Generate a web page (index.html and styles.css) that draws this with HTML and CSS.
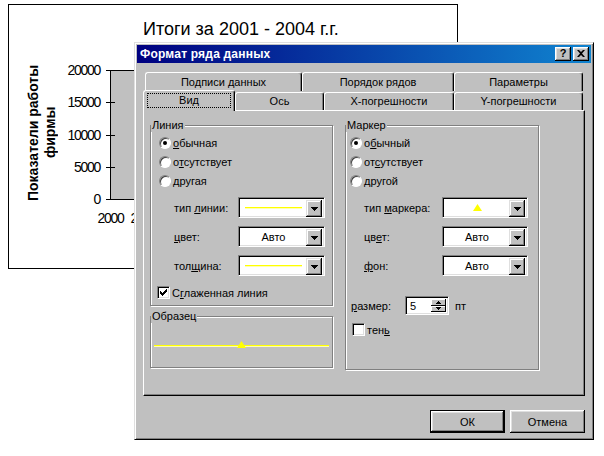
FILE: index.html
```html
<!DOCTYPE html>
<html>
<head>
<meta charset="utf-8">
<link rel="stylesheet" href="styles.css">
</head>
<body>
<div class="desk">
  <div class="chart">
    <div class="chart-title">Итоги за 2001 - 2004 г.г.</div>
    <div class="chart-main">
      <div class="ylabel">Показатели работы<br>фирмы</div>
      <div class="yticks"><span>20000</span><span>15000</span><span>10000</span><span>5000</span><span>0</span></div>
      <div class="tickmarks"><i></i><i></i><i></i><i></i><i></i></div>
      <div class="plot"></div>
    </div>
    <div class="xlabels"><span>2000</span><span>2001</span><span>2002</span><span>2003</span><span>2004</span></div>
  </div>

  <div class="dialog">
    <div class="titlebar">
      <span class="title">Формат ряда данных</span>
      <div class="cbtns">
        <span class="cbtn">?</span>
        <span class="cbtn"><svg width="8" height="7" viewBox="0 0 8 7"><path d="M0 0h2l2 2 2-2h2L5 3.5 8 7H6L4 5 2 7H0l3-3.5z" fill="#000"/></svg></span>
      </div>
    </div>
    <div class="dlg-body">
      <div class="tabrow back">
        <div class="tab w157">Подписи данных</div>
        <div class="tab w152">Порядок рядов</div>
        <div class="tab w129">Параметры</div>
      </div>
      <div class="tabrow front">
        <div class="tab sel w92"><span class="focus">Вид</span></div>
        <div class="tab w89">Ось</div>
        <div class="tab w130">X-погрешности</div>
        <div class="tab w129">Y-погрешности</div>
      </div>
      <div class="panel">
        <div class="col-left">
          <div class="group g-line">
            <div class="gtitle">Линия</div>
            <div class="radios pad-l">
              <div class="rrow"><span class="radio on"></span><span><u>о</u>бычная</span></div>
              <div class="rrow"><span class="radio"></span><span>о<u>т</u>сутствует</span></div>
              <div class="rrow"><span class="radio"></span><span>другая</span></div>
            </div>
            <div class="crows crows-l">
              <div class="crow"><span class="clabel">тип <u>л</u>инии:</span>
                <div class="combo"><div class="cval"><span class="yline"></span></div><div class="dd"><svg width="7" height="4" viewBox="0 0 7 4"><path d="M0 0h7v1h-1v1h-1v1h-1v1h-1v-1h-1v-1h-1v-1h-1z"/></svg></div></div>
              </div>
              <div class="crow"><span class="clabel"><u>ц</u>вет:</span>
                <div class="combo"><div class="cval">Авто</div><div class="dd"><svg width="7" height="4" viewBox="0 0 7 4"><path d="M0 0h7v1h-1v1h-1v1h-1v1h-1v-1h-1v-1h-1v-1h-1z"/></svg></div></div>
              </div>
              <div class="crow"><span class="clabel">тол<u>щ</u>ина:</span>
                <div class="combo"><div class="cval"><span class="yline"></span></div><div class="dd"><svg width="7" height="4" viewBox="0 0 7 4"><path d="M0 0h7v1h-1v1h-1v1h-1v1h-1v-1h-1v-1h-1v-1h-1z"/></svg></div></div>
              </div>
            </div>
            <div class="chkrow chk-smooth">
              <span class="check"><svg width="7" height="7" viewBox="0 0 7 7"><path d="M6 0h1v3h-1v1h-1v1h-1v1h-1v1h-1v-1h-1v-1h-1v-3h1v1h1v1h1v-1h1v-1h1v-1h1z"/></svg></span>
              <span>С<u>г</u>лаженная линия</span>
            </div>
          </div>
          <div class="group g-sample">
            <div class="gtitle">Образец</div>
            <div class="sample"><svg width="9" height="7" viewBox="0 0 9 7"><path d="M4.5 0L9 7H0z" fill="#ffff00"/></svg></div>
          </div>
        </div>
        <div class="group g-marker">
          <div class="gtitle">Маркер</div>
          <div class="radios pad-r">
            <div class="rrow"><span class="radio on"></span><span>о<u>б</u>ычный</span></div>
            <div class="rrow"><span class="radio"></span><span>от<u>с</u>утствует</span></div>
            <div class="rrow"><span class="radio"></span><span>другой</span></div>
          </div>
          <div class="crows crows-r">
            <div class="crow"><span class="clabel">тип <u>м</u>аркера:</span>
              <div class="combo c86"><div class="cval"><svg width="9" height="7" viewBox="0 0 9 7"><path d="M4.5 0L9 7H0z" fill="#ffff00"/></svg></div><div class="dd"><svg width="7" height="4" viewBox="0 0 7 4"><path d="M0 0h7v1h-1v1h-1v1h-1v1h-1v-1h-1v-1h-1v-1h-1z"/></svg></div></div>
            </div>
            <div class="crow"><span class="clabel">цв<u>е</u>т:</span>
              <div class="combo c86"><div class="cval">Авто</div><div class="dd"><svg width="7" height="4" viewBox="0 0 7 4"><path d="M0 0h7v1h-1v1h-1v1h-1v1h-1v-1h-1v-1h-1v-1h-1z"/></svg></div></div>
            </div>
            <div class="crow"><span class="clabel"><u>ф</u>он:</span>
              <div class="combo c86"><div class="cval">Авто</div><div class="dd"><svg width="7" height="4" viewBox="0 0 7 4"><path d="M0 0h7v1h-1v1h-1v1h-1v1h-1v-1h-1v-1h-1v-1h-1z"/></svg></div></div>
            </div>
          </div>
          <div class="sizerow">
            <span class="slabel"><u>р</u>азмер:</span>
            <div class="spin">
              <span class="sval">5</span>
              <div class="sbtns">
                <div class="sb"><svg width="5" height="3" viewBox="0 0 5 3"><path d="M2 0h1v1h1v1h1v1H0V2h1V1h1z"/></svg></div>
                <div class="sb"><svg width="5" height="3" viewBox="0 0 5 3"><path d="M0 0h5v1H4v1H3v1H2V2H1V1H0z"/></svg></div>
              </div>
            </div>
            <span class="unit">пт</span>
          </div>
          <div class="chkrow chk-shadow">
            <span class="check"></span>
            <span>тен<u>ь</u></span>
          </div>
        </div>
      </div>
      <div class="btns">
        <div class="btn default">ОК</div>
        <div class="btn">Отмена</div>
      </div>
    </div>
  </div>
</div>
</body>
</html>
```

FILE: styles.css
```css
* { box-sizing: border-box; }
html, body { margin: 0; padding: 0; background: #fff; }
.desk {
  position: relative;
  width: 604px;
  height: 456px;
  overflow: hidden;
  font-family: "Liberation Sans", Arial, sans-serif;
  color: #000;
}

/* ---------- chart window ---------- */
.chart {
  position: absolute;
  left: 8px;
  top: 4px;
  width: 450px;
  height: 265px;
  border: 1px solid #000;
  background: #fff;
}
.chart-title {
  margin: 13px 0 0 134px;
  font-size: 18px;
  line-height: 22px;
  white-space: nowrap;
}
.chart-main {
  display: flex;
  align-items: flex-start;
  margin-top: 22px;
}
.ylabel {
  writing-mode: vertical-rl;
  transform: rotate(180deg);
  width: 34px;
  height: 145px;
  margin: -2px 0 0 16px;
  font-weight: bold;
  font-size: 14px;
  line-height: 17px;
  text-align: center;
  white-space: nowrap;
}
.yticks {
  width: 41px;
  height: 145px;
  display: flex;
  flex-direction: column;
  justify-content: space-between;
  align-items: flex-end;
  font-size: 14px;
  line-height: 16px;
  letter-spacing: -1.3px;
}
.tickmarks {
  width: 9px;
  height: 130px;
  margin: 8px -5px 0 6px;
  display: flex;
  flex-direction: column;
  justify-content: space-between;
  position: relative;
  z-index: 1;
}
.tickmarks i { display: block; height: 1px; background: #000; }
.plot {
  width: 340px;
  height: 130px;
  margin-top: 8px;
  background: #c0c0c0;
  border: 1px solid #000;
  border-right: none;
}
.xlabels {
  display: flex;
  margin: 3px 0 0 85px;
  font-size: 14px;
  line-height: 16px;
  letter-spacing: -1.3px;
}
.xlabels span { width: 33px; text-align: center; flex: none; }

/* ---------- dialog ---------- */
.dialog {
  position: absolute;
  left: 134px;
  top: 42px;
  width: 460px;
  height: 398px;
  background: #c0c0c0;
  border: 1px solid;
  border-color: #dfdfdf #000 #000 #dfdfdf;
  box-shadow: inset 1px 1px #fff, inset -1px -1px #808080;
  padding: 2px;
  font-size: 11px;
  display: flex;
  flex-direction: column;
}
.titlebar {
  height: 18px;
  flex: none;
  display: flex;
  align-items: center;
  justify-content: space-between;
  background: linear-gradient(to right, #000080, #1084d0);
  padding: 0 2px 0 3px;
}
.title { color: #fff; font-weight: bold; font-size: 12px; letter-spacing: 0.2px; }
.cbtns { display: flex; gap: 2px; }
.cbtn {
  width: 16px;
  height: 14px;
  background: #c0c0c0;
  box-shadow: inset -1px -1px #000, inset 1px 1px #fff, inset -2px -2px #808080, inset 2px 2px #dfdfdf;
  display: flex;
  align-items: center;
  justify-content: center;
  font-weight: bold;
  font-size: 11px;
  line-height: 11px;
  padding-bottom: 1px;
}

.dlg-body {
  flex: 1;
  padding: 9px 6px 0 6px;
  display: flex;
  flex-direction: column;
}
.tabrow { display: flex; align-items: flex-end; height: 19px; flex: none; }
.tabrow.back { padding-left: 2px; }
.tab {
  height: 18px;
  border: 1px solid #fff;
  border-right-color: #000;
  border-bottom: none;
  border-radius: 3px 3px 0 0;
  box-shadow: inset -1px 0 #808080;
  text-align: center;
  padding-top: 2px;
  line-height: 13px;
  white-space: nowrap;
  flex: none;
}
.back .tab { height: 19px; padding-top: 3px; }
.tab.sel {
  height: 21px;
  margin-bottom: -1px;
  position: relative;
  z-index: 2;
  background: #c0c0c0;
  padding: 2px 3px 0 3px;
}
.focus {
  display: block;
  height: 15px;
  border: 1px dotted #000;
  line-height: 13px;
}
.w157 { width: 157px; }
.w152 { width: 152px; }
.w129 { width: 129px; }
.w92 { width: 92px; }
.w89 { width: 89px; }
.w130 { width: 130px; }

.panel {
  height: 286px;
  flex: none;
  border: 1px solid;
  border-color: #fff #000 #000 #fff;
  box-shadow: inset -1px -1px #808080;
  display: flex;
  align-items: flex-start;
  gap: 12px;
  padding: 14px 0 0 6px;
}
.col-left {
  width: 183px;
  display: flex;
  flex-direction: column;
  gap: 10px;
}
.group {
  border: 1px solid #808080;
  box-shadow: 1px 1px 0 #fff, inset 1px 1px 0 #fff;
}
.gtitle {
  width: fit-content;
  margin-top: -7px;
  padding: 0 1px;
  background: #c0c0c0;
  line-height: 13px;
}
.g-line { height: 181px; }
.g-sample { height: 52px; }
.g-marker { width: 194px; height: 245px; }

.radios { margin-top: 1px; }
.rrow { height: 19px; display: flex; align-items: center; gap: 2px; }
.pad-l .rrow { padding-left: 8px; }
.pad-r .rrow { padding-left: 4px; }
.radio {
  width: 12px;
  height: 12px;
  border-radius: 50%;
  background: #fff;
  border: 1px solid;
  border-color: #808080 #fff #fff #808080;
  box-shadow: inset 1px 1px #404040, 0 0 0 0.5px #c0c0c0;
  display: flex;
  align-items: center;
  justify-content: center;
  flex: none;
}
.radio.on::after {
  content: "";
  width: 4px;
  height: 4px;
  border-radius: 50%;
  background: #000;
}

.crows { margin-top: 7px; display: flex; flex-direction: column; gap: 8px; }
.crows-l { padding-left: 23px; }
.crows-l .clabel { width: 64px; }
.crows-r { padding-left: 18px; }
.crows-r .clabel { width: 78px; }
.crow { height: 21px; display: flex; align-items: center; }
.combo {
  width: 87px;
  height: 21px;
  display: flex;
  background: #fff;
  border: 1px solid;
  border-color: #808080 #fff #fff #808080;
  box-shadow: inset 1px 1px #000, inset -1px -1px #dfdfdf;
  padding: 2px;
}
.combo.c86 { width: 86px; }
.cval {
  flex: 1;
  display: flex;
  align-items: center;
  justify-content: center;
  padding: 0 4px;
}
.yline {
  flex: 1;
  height: 1px;
  background: #ffff00;
  box-shadow: 0 1px 0 #ffffb0;
}
.dd {
  width: 16px;
  height: 17px;
  flex: none;
  background: #c0c0c0;
  box-shadow: inset -1px -1px #000, inset 1px 1px #dfdfdf, inset -2px -2px #808080, inset 2px 2px #fff;
  display: flex;
  align-items: center;
  justify-content: center;
}

.chkrow { display: flex; align-items: center; gap: 2px; height: 13px; }
.chk-smooth { margin-top: 10px; padding-left: 6px; }
.chk-shadow { margin-top: 8px; padding-left: 6px; }
.check {
  width: 13px;
  height: 13px;
  flex: none;
  background: #fff;
  border: 1px solid;
  border-color: #808080 #fff #fff #808080;
  box-shadow: inset 1px 1px #000, inset -1px -1px #dfdfdf;
  display: flex;
  align-items: center;
  justify-content: center;
}

.sample {
  margin: 19px 3px 0;
  height: 7px;
  display: flex;
  justify-content: center;
  align-items: center;
  background: linear-gradient(to bottom, transparent 3px, #ffff00 3px, #ffff00 4px, #ffffb0 4px, #ffffb0 5px, transparent 5px);
}
.sample svg { margin-top: -2px; }

.sizerow {
  margin-top: 20px;
  height: 19px;
  display: flex;
  align-items: center;
  padding-left: 5px;
}
.slabel { width: 54px; }
.spin {
  width: 44px;
  height: 19px;
  display: flex;
  background: #fff;
  border: 1px solid;
  border-color: #808080 #fff #fff #808080;
  box-shadow: inset 1px 1px #000, inset -1px -1px #dfdfdf;
  padding: 2px;
}
.sval { flex: 1; line-height: 15px; padding-left: 2px; }
.sbtns { width: 15px; display: flex; flex-direction: column; }
.sb {
  flex: 1;
  background: #c0c0c0;
  box-shadow: inset -1px -1px #000, inset 1px 1px #fff;
  display: flex;
  align-items: center;
  justify-content: center;
}
.unit { margin-left: 6px; }

.btns {
  display: flex;
  justify-content: flex-end;
  gap: 5px;
  margin-top: 14px;
}
.btn {
  width: 75px;
  height: 23px;
  background: #c0c0c0;
  box-shadow: inset -1px -1px #000, inset 1px 1px #fff, inset -2px -2px #808080, inset 2px 2px #dfdfdf;
  display: flex;
  align-items: center;
  justify-content: center;
}
.btn.default {
  border: 1px solid #000;
}
```
